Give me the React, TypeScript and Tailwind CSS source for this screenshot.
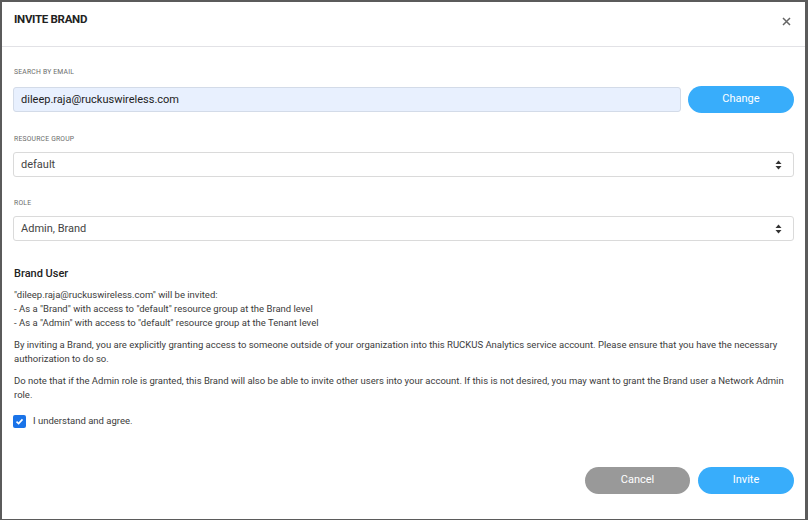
import React, { useState } from 'react';

const SortIcon = () => (
  <svg width="7" height="10" viewBox="0 0 7 10" className="text-[#333]">
    <path d="M3.5 0.5L6.5 4H0.5Z" fill="currentColor" />
    <path d="M3.5 9.5L6.5 6H0.5Z" fill="currentColor" />
  </svg>
);

const Label = ({ children }: { children: React.ReactNode }) => (
  <div className="text-[6.8px] leading-[8px] tracking-[0.2px] text-[#6b6b6b] uppercase pl-[1px]">{children}</div>
);

const Select = ({ value }: { value: string }) => (
  <div className="h-[25px] border border-[#dadada] rounded-[3px] bg-white flex items-center justify-between pl-[7px] pr-[11px]">
    <span className="text-[11px] text-[#444] pt-[2px]">{value}</span>
    <SortIcon />
  </div>
);

const App = () => {
  const [agreed, setAgreed] = useState(true);

  return (
    <div
      className="w-[808px] h-[520px] bg-[#5b5b5b] pt-[2px] pl-[2px] pr-[3px] pb-[1px]"
      style={{ fontFamily: 'Roboto, "Liberation Sans", sans-serif' }}
    >
      <div className="h-full bg-white flex flex-col">
        {/* Header */}
        <div className="h-[45px] border-b border-[#e2e2e6] flex justify-between pl-[12px] pr-[14px] shrink-0">
          <div className="pt-[10px] text-[11.5px] leading-[14px] font-bold text-[#222] tracking-[-0.3px]">INVITE BRAND</div>
          <button className="pt-[15px] h-fit text-[#666]">
            <svg width="9" height="9" viewBox="0 0 9 9">
              <path d="M1 1L8 8M8 1L1 8" stroke="currentColor" strokeWidth="1.5" />
            </svg>
          </button>
        </div>

        {/* Body */}
        <div className="flex-1 flex flex-col px-[11px]">
          <div className="mt-[21px]">
            <Label>Search by email</Label>
          </div>
          <div className="mt-[10px] flex items-center gap-[7px]">
            <div className="flex-1 h-[25px] bg-[#e8f0fe] border border-[#d3dbe8] rounded-[3px] flex items-center pl-[7px]">
              <span className="text-[11px] text-[#222] pt-[2px]">dileep.raja@ruckuswireless.com</span>
            </div>
            <button className="w-[106px] h-[27px] rounded-full bg-[#38adfb] text-white text-[11px]">Change</button>
          </div>

          <div className="mt-[22px]">
            <Label>Resource group</Label>
          </div>
          <div className="mt-[9px]">
            <Select value="default" />
          </div>

          <div className="mt-[22px]">
            <Label>Role</Label>
          </div>
          <div className="mt-[9px]">
            <Select value="Admin, Brand" />
          </div>

          <div className="mt-[26px] pl-[1px] text-[11px] leading-[14px] font-medium text-[#222]">Brand User</div>

          <div className="mt-[7px] pl-[1px] text-[9.5px] leading-[14px] text-[#3c3c3c]">
            <p>"dileep.raja@ruckuswireless.com" will be invited:</p>
            <p>- As a "Brand" with access to "default" resource group at the Brand level</p>
            <p>- As a "Admin" with access to "default" resource group at the Tenant level</p>
            <p className="mt-[8px]">
              By inviting a Brand, you are explicitly granting access to someone outside of your organization into this RUCKUS Analytics service account. Please ensure that you have the necessary authorization to do so.
            </p>
            <p className="mt-[8px]">
              Do note that if the Admin role is granted, this Brand will also be able to invite other users into your account. If this is not desired, you may want to grant the Brand user a Network Admin role.
            </p>
          </div>

          <label className="mt-[12px] flex items-center gap-[7px] cursor-pointer w-fit">
            <span
              onClick={() => setAgreed(!agreed)}
              className={agreed ? 'w-[13px] h-[13px] rounded-[2px] bg-[#1a73e8] flex items-center justify-center' : 'w-[13px] h-[13px] rounded-[2px] border border-[#777] bg-white'}
            >
              {agreed && (
                <svg width="9" height="9" viewBox="0 0 9 9">
                  <path d="M1.5 4.6L3.6 6.6L7.5 2.4" stroke="white" strokeWidth="1.6" fill="none" />
                </svg>
              )}
            </span>
            <span className="text-[9.5px] text-[#3c3c3c]">I understand and agree.</span>
          </label>

          <div className="mt-auto mb-[25px] flex justify-end gap-[8px]">
            <button className="w-[105px] h-[27px] rounded-full bg-[#999999] text-white text-[11px]">Cancel</button>
            <button className="w-[96px] h-[27px] rounded-full bg-[#38adfb] text-white text-[11px]">Invite</button>
          </div>
        </div>
      </div>
    </div>
  );
};

export default App;
